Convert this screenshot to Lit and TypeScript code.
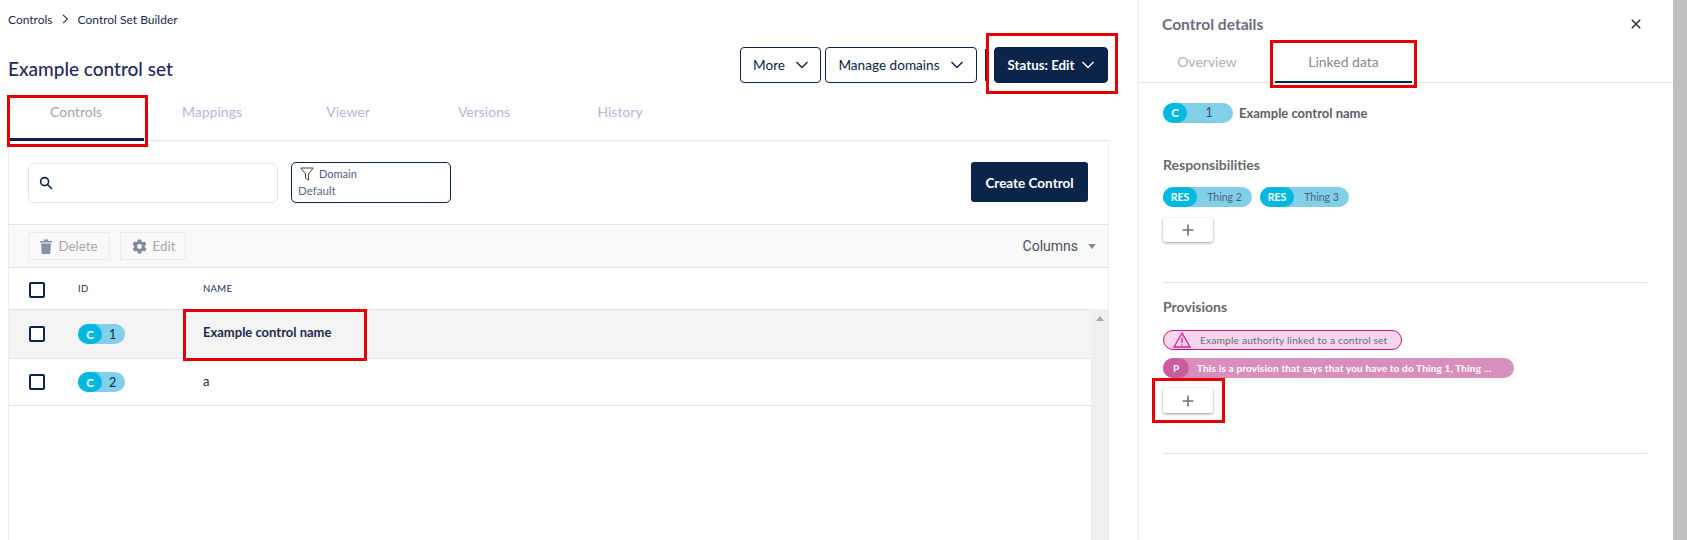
import { LitElement, html, css } from "lit";
import { customElement } from "lit/decorators.js";

const chevron = html`<svg class="chev" width="14" height="8" viewBox="0 0 14 8" fill="none" stroke="currentColor" stroke-width="1.4"><path d="M1.5 1 L7 6.5 L12.5 1"/></svg>`;
const plus = html`<svg width="12" height="12" viewBox="0 0 12 12" stroke="#6f6f88" stroke-width="1.6"><path d="M6 .5V11.5M.5 6H11.5"/></svg>`;

const marks = [
  { x: 7, y: 95, w: 141, h: 52 },
  { x: 986, y: 33, w: 132, h: 61 },
  { x: 183, y: 309, w: 184, h: 52 },
  { x: 1270, y: 40, w: 147, h: 48 },
  { x: 1152, y: 378, w: 73, h: 45 },
];

@customElement("app-root")
export class AppRoot extends LitElement {
  static styles = css`
    :host { display: flex; position: relative; width: 1687px; height: 540px; overflow: hidden; background: #fff; font-family: Lato, sans-serif; color: #0a2549; }
    * { box-sizing: border-box; }
    .main { width: 1138px; height: 540px; display: flex; flex-direction: column; padding-left: 8px; padding-right: 29px; background: #fff; }
    .crumbs { height: 38px; display: flex; align-items: center; font-size: 12px; color: #1c2b4a; gap: 9px; flex: none; }
    .head { height: 46px; flex: none; display: flex; padding-top: 9px; padding-right: 1px; }
    .title { font-size: 19px; font-weight: 500; color: #1e2a5e; margin-top: 10px; line-height: 24px; flex: 1; }
    .btn { height: 36px; border: 1px solid #0a2549; border-radius: 4px; background: #fff; color: #0a2549; font-size: 13.6px; display: flex; align-items: center; justify-content: center; gap: 10px; font-family: Lato, sans-serif; }
    .more { width: 81px; margin-right: 4px; padding-left: 1px; }
    .manage { width: 152px; margin-right: 8px; box-shadow: none; }
    .sep { width: 2px; height: 32px; background: #0a2549; margin: 2px 7px 0 0; }
    .status { width: 114px; background: #0a2549; color: #fff; font-weight: 700; font-size: 13.3px; gap: 7px; padding-left: 1px; }
    .tabs { height: 58px; flex: none; display: flex; border-bottom: 1px solid #e0e0e0; margin-top: -1px; }
    .tab { width: 136px; display: flex; justify-content: center; padding-top: 20px; font-size: 14px; color: #b4b6dc; border-bottom: 3px solid transparent; margin-bottom: -1px; line-height: 18px; }
    .tab.on { color: #a3a3a8; border-bottom-color: #0a2549; }
    .card { flex: 1; min-height: 0; display: flex; flex-direction: column; border-left: 1px solid #eee; border-right: 1px solid #eee; border-top-right-radius: 6px; }
    .filters { height: 83px; flex: none; display: flex; align-items: flex-start; padding: 21px 20px 0 19px; }
    .search { width: 250px; height: 40px; margin-top: 1px; border: 1px solid #e2e2e2; border-radius: 6px; display: flex; align-items: center; padding-left: 10px; }
    .domain { width: 160px; height: 41px; margin-left: 13px; border: 1px solid #0a2549; border-radius: 5px; padding: 1px 6px; font-size: 11.5px; color: #5d6a80; line-height: 15px; }
    .domain div { display: flex; align-items: center; gap: 5px; padding-left: 2px; height: 19px; font-size: 11px; color: #4a5d8a; }
    .grow { flex: 1; }
    .create { width: 117px; height: 40px; padding-top: 1px; background: #0a2549; color: #fff; border-radius: 3px; font-size: 13.5px; font-weight: 700; display: flex; align-items: center; justify-content: center; }
    .tools { height: 44px; flex: none; background: #f9f9f9; border-top: 1px solid #e3e3e3; border-bottom: 1px solid #e3e3e3; display: flex; align-items: center; padding: 0 12px 0 19px; gap: 10px; }
    .tool { height: 28px; border: 1px solid #ececec; display: flex; align-items: center; justify-content: center; gap: 6px; font-size: 13.4px; color: #a8a8a8; }
    .del { width: 82px; }
    .edit { width: 66px; gap: 5px; }
    .columns { font-family: Roboto, sans-serif; font-size: 14px; color: #46505f; display: flex; align-items: center; gap: 10px; }
    .caret { width: 0; height: 0; border-left: 4.5px solid transparent; border-right: 4.5px solid transparent; border-top: 5px solid #8a8a8a; }
    .hdr { height: 41px; flex: none; display: grid; grid-template-columns: 49px 125px 1fr; align-items: center; padding-left: 20px; font-size: 9.5px; color: #1e2a5e; letter-spacing: .3px; }
    .hdr .check { margin-top: 3px; }
    .body { flex: 1; min-height: 0; display: flex; }
    .rows { flex: 1; min-width: 0; border-top: 1px solid #e3e3e3; }
    .track { width: 17px; background: #f0f0f0; display: flex; justify-content: center; padding-top: 7px; }
    .up { width: 0; height: 0; border-left: 4px solid transparent; border-right: 4px solid transparent; border-bottom: 5px solid #a6a6a6; }
    .row { height: 47px; display: grid; grid-template-columns: 49px 125px 1fr; align-items: center; padding-left: 20px; border-bottom: 1px solid #e3e3e3; font-size: 13px; color: #1e2a3e; }
    .name { padding-bottom: 3px; }
    .row.sel { background: #f4f4f4; height: 49px; font-size: 13px; font-weight: 700; color: #1e2a4e; }
    .row.sel .name { padding-bottom: 4px; }
    .check { width: 16px; height: 16px; border: 2px solid #0a2549; border-radius: 2px; background: #fff; }
    .pill { height: 20px; border-radius: 10px; background: #82cfe9; display: inline-flex; align-items: center; font-size: 12.5px; font-weight: 400; color: #14283f; }
    .pill b { height: 20px; border-radius: 10px; background: #00b8e0; color: #fff; font-size: 11.5px; display: flex; align-items: center; justify-content: center; font-weight: 700; flex: none; }
    .cell { display: flex; }
    .cid { width: 47px; }
    .cid b { width: 24px; }
    .cid span { flex: 1; text-align: center; padding-right: 2px; }
    .side { flex: 1; min-width: 0; height: 540px; border-left: 1px solid #ececec; box-shadow: -2px 0 3px rgba(0,0,0,.03); display: flex; flex-direction: column; color: #555; }
    .shead { height: 40px; flex: none; display: flex; align-items: flex-start; padding: 15px 32px 0 23px; font-size: 15.6px; font-weight: 700; color: #6d6d82; justify-content: space-between; line-height: 18px; }
    .shead svg { margin-top: 4px; }
    .stabs { height: 44px; flex: none; display: flex; border-bottom: 1px solid #e2e2e2; margin-top: -1px; }
    .stab { display: flex; justify-content: center; padding-top: 14px; font-size: 14px; line-height: 18px; color: #b0b0b0; width: 136px; border-bottom: 2px solid transparent; margin-bottom: -1px; }
    .stab.on { color: #8a8a8a; border-bottom-color: #0a2549; width: 137px; }
    .content { padding: 19px 24px 0; flex: 1; }
    .named { display: flex; align-items: center; gap: 6px; font-size: 13px; font-weight: 700; color: #5d5d66; height: 21px; }
    .named .cid { width: 70px; color: #3f4a5c; }
    h3 { margin: 0; font-size: 14px; font-weight: 700; color: #666a70; line-height: 18px; }
    .resp { margin-top: 33px; }
    .chips { display: flex; gap: 8px; margin-top: 13px; }
    .res { width: 89px; font-size: 10.5px; color: #4d6476; }
    .res b { width: 34px; font-size: 10.5px; }
    .res span { flex: 1; text-align: center; }
    .add { width: 50px; height: 24px; border-radius: 3px; background: #fff; box-shadow: 0 1px 3px rgba(0,0,0,.4); display: flex; align-items: center; justify-content: center; }
    .resp .add { margin-top: 11px; }
    .rule { height: 1px; background: #e2e2e2; width: 484px; }
    .r1 { margin-top: 40px; }
    .prov { margin-top: 15px; }
    .auth { margin-top: 14px; width: 239px; height: 20px; border: 1px solid #c8128f; border-radius: 10px; background: #f5d7ec; display: flex; align-items: center; gap: 9px; padding-left: 9px; font-size: 10.2px; font-weight: 400; color: #6f6a78; letter-spacing: .18px; }
    .pp { margin-top: 8px; width: 351px; background: #d98fbb; color: #fff; font-size: 10px; font-weight: 700; }
    .pp b { width: 26px; background: #cb5c9f; font-size: 10px; }
    .pp span { padding-left: 8px; white-space: nowrap; letter-spacing: .16px; }
    .prov .add { margin-top: 10px; height: 25px; }
    .r2 { margin-top: 40px; }
    .scroll { width: 14px; flex: none; background: #c0c0c0; }
    .mark { position: absolute; border: 3px solid #e60000; pointer-events: none; }
  `;

  row(id: string, name: string, sel = false) {
    return html`<div class="row ${sel ? "sel" : ""}">
      <div class="check"></div>
      <div class="cell"><span class="pill cid"><b>C</b><span>${id}</span></span></div>
      <div class="name">${name}</div>
    </div>`;
  }

  render() {
    return html`
      <div class="main">
        <div class="crumbs">
          <span>Controls</span>
          <svg width="7" height="10" viewBox="0 0 7 10" fill="none" stroke="#333" stroke-width="1.1"><path d="M1 .8 5.5 5 1 9.2"/></svg>
          <span>Control Set Builder</span>
        </div>
        <div class="head">
          <div class="title">Example control set</div>
          <div class="btn more">More ${chevron}</div>
          <div class="btn manage">Manage domains ${chevron}</div>
          <div class="sep"></div>
          <div class="btn status">Status: Edit ${chevron}</div>
        </div>
        <div class="tabs">
          <div class="tab on">Controls</div>
          <div class="tab">Mappings</div>
          <div class="tab">Viewer</div>
          <div class="tab">Versions</div>
          <div class="tab">History</div>
        </div>
        <div class="card">
          <div class="filters">
            <div class="search">
              <svg width="14" height="14" viewBox="0 0 14 14" fill="none" stroke="#0a2549" stroke-width="1.6"><circle cx="5.6" cy="5.6" r="4"/><path d="M8.5 8.5 13 13"/></svg>
            </div>
            <div class="domain">
              <div>
                <svg width="14" height="14" viewBox="0 0 14 14" fill="none" stroke="#444" stroke-width="1"><path d="M.8 1H13.2L8.5 7V13L5.5 11V7Z"/></svg>
                Domain
              </div>
              Default
            </div>
            <div class="grow"></div>
            <div class="create">Create Control</div>
          </div>
          <div class="tools">
            <div class="tool del">
              <svg width="12" height="15" viewBox="0 0 12 15" fill="#8592a6"><path d="M0 2H4V.5H8V2H12V3.5H0ZM1 4.5H11L10.2 15H1.8Z"/></svg>
              Delete
            </div>
            <div class="tool edit">
              <svg width="17" height="17" viewBox="0 0 24 24" fill="#7d8a9e"><path fill-rule="evenodd" d="M19.4 13c.04-.33.1-.66.1-1s-.06-.67-.1-1l2.1-1.65c.2-.15.25-.42.12-.64l-2-3.46c-.12-.22-.4-.3-.6-.22l-2.5 1c-.52-.4-1.08-.73-1.7-.98l-.37-2.65A.5.5 0 0 0 14 2h-4c-.25 0-.46.18-.5.42l-.37 2.65c-.62.25-1.18.58-1.7.98l-2.5-1c-.22-.08-.48 0-.6.22l-2 3.46c-.13.22-.07.5.12.64L4.6 11c-.04.33-.1.66-.1 1s.06.67.1 1l-2.1 1.65c-.2.15-.25.42-.12.64l2 3.46c.12.22.38.3.6.22l2.5-1c.52.4 1.08.73 1.7.98l.37 2.65c.04.24.25.42.5.42h4c.25 0 .46-.18.5-.42l.37-2.65c.62-.25 1.18-.58 1.7-.98l2.5 1c.22.08.48 0 .6-.22l2-3.46c.13-.22.07-.5-.12-.64ZM12 15.5a3.5 3.5 0 1 1 0-7 3.5 3.5 0 0 1 0 7Z"/></svg>
              Edit
            </div>
            <div class="grow"></div>
            <div class="columns">Columns <span class="caret"></span></div>
          </div>
          <div class="hdr"><div class="check"></div><div>ID</div><div>NAME</div></div>
          <div class="body">
            <div class="rows">
              ${this.row("1", "Example control name", true)}
              ${this.row("2", "a")}
            </div>
            <div class="track"><div class="up"></div></div>
          </div>
        </div>
      </div>
      <div class="side">
        <div class="shead">
          <span>Control details</span>
          <svg width="10" height="10" viewBox="0 0 10 10" stroke="#333" stroke-width="1.6"><path d="M.8.8 9.2 9.2M9.2.8.8 9.2"/></svg>
        </div>
        <div class="stabs">
          <div class="stab">Overview</div>
          <div class="stab on">Linked data</div>
        </div>
        <div class="content">
          <div class="named"><span class="pill cid"><b>C</b><span>1</span></span> Example control name</div>
          <div class="resp">
            <h3>Responsibilities</h3>
            <div class="chips">
              <span class="pill res"><b>RES</b><span>Thing 2</span></span>
              <span class="pill res"><b>RES</b><span>Thing 3</span></span>
            </div>
            <div class="add">${plus}</div>
          </div>
          <div class="rule r1"></div>
          <div class="prov">
            <h3>Provisions</h3>
            <div class="auth">
              <svg width="18" height="16" viewBox="0 0 18 16" fill="none" stroke="#d61f9b" stroke-width="1.3"><path d="M9 1.2 17 15H1Z"/><path d="M9 5.5V11M9 12.2V13.6"/></svg>
              Example authority linked to a control set
            </div>
            <div class="pill pp"><b>P</b><span>This is a provision that says that you have to do Thing 1, Thing ...</span></div>
            <div class="add">${plus}</div>
          </div>
          <div class="rule r2"></div>
        </div>
      </div>
      <div class="scroll"></div>
      ${marks.map((m) => html`<div class="mark" style="left:${m.x}px;top:${m.y}px;width:${m.w}px;height:${m.h}px"></div>`)}
    `;
  }
}
